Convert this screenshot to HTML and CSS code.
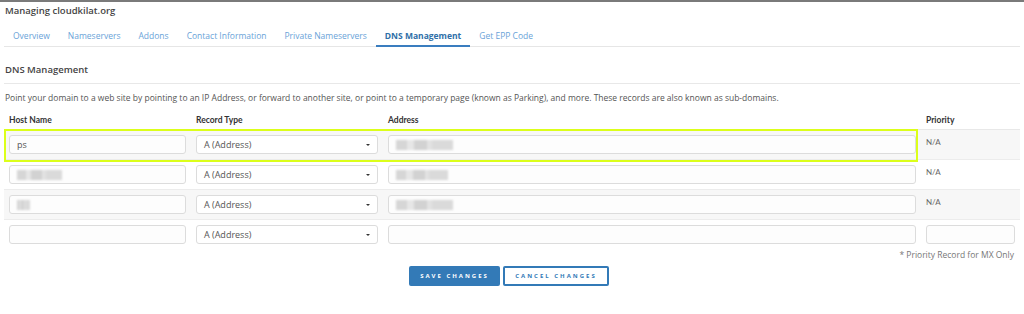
FILE: index.html
```html
<!DOCTYPE html>
<html lang="en">
<head>
    <meta charset="UTF-8">
    <meta name="viewport" content="width=device-width, initial-scale=1.0">
    <title>Managing cloudkilat.org - DNS Management</title>
    <link rel="stylesheet" href="styles.css">
</head>
<body>

    <div class="page">
        <h1 class="page-title">Managing cloudkilat.org</h1>

        <!-- domain tabs -->
        <ul class="domain-tabs">
            <li><a href="#">Overview</a></li>
            <li><a href="#">Nameservers</a></li>
            <li><a href="#">Addons</a></li>
            <li><a href="#">Contact Information</a></li>
            <li><a href="#">Private Nameservers</a></li>
            <li class="active"><a href="#">DNS Management</a></li>
            <li><a href="#">Get EPP Code</a></li>
        </ul>

        <h2 class="section-title">DNS Management</h2>
        <p class="section-intro">Point your domain to a web site by pointing to an IP Address, or forward to another site, or point to a temporary page (known as Parking), and more. These records are also known as sub-domains.</p>

        <form class="dns-form" action="#" method="POST">
            <div class="dns-table-wrap">
                <table class="dns-table">
                    <thead>
                        <tr>
                            <th class="col-host">Host Name</th>
                            <th class="col-type">Record Type</th>
                            <th class="col-address">Address</th>
                            <th class="col-priority">Priority</th>
                        </tr>
                    </thead>
                    <tbody>
                        <tr>
                            <td><div class="field">ps</div></td>
                            <td><div class="field select-field">A (Address)</div></td>
                            <td><div class="field"><span class="blurred w57"></span></div></td>
                            <td class="na">N/A</td>
                        </tr>
                        <tr>
                            <td><div class="field"><span class="blurred w45"></span></div></td>
                            <td><div class="field select-field">A (Address)</div></td>
                            <td><div class="field"><span class="blurred w52"></span></div></td>
                            <td class="na">N/A</td>
                        </tr>
                        <tr>
                            <td><div class="field"><span class="blurred w13"></span></div></td>
                            <td><div class="field select-field">A (Address)</div></td>
                            <td><div class="field"><span class="blurred w57"></span></div></td>
                            <td class="na">N/A</td>
                        </tr>
                        <tr>
                            <td><div class="field"></div></td>
                            <td><div class="field select-field">A (Address)</div></td>
                            <td><div class="field"></div></td>
                            <td><div class="field"></div></td>
                        </tr>
                    </tbody>
                </table>

                <!-- highlight marker drawn over the first record -->
                <div class="row-highlight"></div>
            </div>

            <p class="priority-note">* Priority Record for MX Only</p>

            <div class="form-buttons">
                <button type="submit" class="btn btn-save">Save Changes</button>
                <button type="reset" class="btn btn-cancel">Cancel Changes</button>
            </div>
        </form>
    </div>

</body>
</html>
```

FILE: styles.css
```css
/* Basic reset */
body, html {
    margin: 0;
    padding: 0;
    background-color: #ffffff;
    color: #555;
    font-family: "Open Sans", Arial, sans-serif;
}

body {
    border-top: 2px solid #7a7a7a;
}

.page {
    padding: 0 4px;
}

/* Page title */
.page-title {
    margin: 0;
    padding-left: 1px;
    font-size: 9.5px;
    font-weight: 600;
    line-height: 18px;
    color: #444;
}

/* Tabs */
.domain-tabs {
    list-style: none;
    margin: 6px 0 0;
    padding: 0;
    display: flex;
    border-bottom: 1px solid #e6e6e6;
}

.domain-tabs li {
    margin-bottom: -1px;
}

.domain-tabs a {
    display: block;
    padding: 4px 9px 3px;
    font-size: 8.5px;
    line-height: 12px;
    color: #6aa3d8;
    text-decoration: none;
    border-bottom: 2px solid transparent;
}

.domain-tabs li.active a {
    color: #2f6fa8;
    font-weight: 700;
    border-bottom-color: #3a7dbf;
}

/* Section heading */
.section-title {
    margin: 15px 0 0;
    padding: 0 0 5px 1px;
    font-size: 9.5px;
    font-weight: 600;
    line-height: 16px;
    color: #444;
    border-bottom: 1px solid #e8e8e8;
}

.section-intro {
    margin: 8px 0 0;
    padding-left: 1px;
    font-size: 8.5px;
    line-height: 12px;
    color: #555;
}

/* DNS records table */
.dns-table-wrap {
    position: relative;
    margin-top: 6px;
}

.dns-table {
    width: 100%;
    border-collapse: collapse;
    table-layout: fixed;
}

.dns-table th {
    padding: 0 5px;
    height: 19px;
    text-align: left;
    font-family: Lato, "Open Sans", sans-serif;
    font-size: 8.5px;
    font-weight: 700;
    color: #333;
    border-bottom: 1px solid #e8e8e8;
}

.dns-table .col-host { width: 177px; }
.dns-table .col-type { width: 182px; }
.dns-table .col-address { width: 528px; }
.dns-table .col-priority { width: 89px; }

.dns-table td {
    padding: 5px;
    vertical-align: top;
    border-bottom: 1px solid #ececec;
}

.dns-table tbody tr:nth-child(odd) td {
    background-color: #f7f7f7;
}

.dns-table tbody tr:last-child td {
    border-bottom: none;
}

.dns-table td.na {
    padding-top: 7px;
    font-family: Lato, "Open Sans", sans-serif;
    font-size: 8px;
    line-height: 10px;
    color: #666;
}

.field {
    box-sizing: border-box;
    height: 19px;
    padding: 0 7px;
    border: 1px solid #dcdcdc;
    border-radius: 3px;
    background-color: #fdfdfd;
    font-size: 9px;
    line-height: 17px;
    color: #555;
    display: flex;
    align-items: center;
}

.select-field {
    position: relative;
    background-color: #ffffff;
}

/* small dropdown caret */
.select-field::after {
    content: "";
    position: absolute;
    right: 7px;
    top: 8px;
    border-left: 2px solid transparent;
    border-right: 2px solid transparent;
    border-top: 2px solid #333;
}

/* values hidden in the screenshot */
.blurred {
    display: inline-block;
    height: 10px;
    background: linear-gradient(90deg, #d6d6d6 0 20%, #e6e6e6 20% 32%, #d2d2d2 32% 55%, #e2e2e2 55% 64%, #dadada 64% 100%);
    filter: blur(1px);
}

.blurred.w57 { width: 57px; }
.blurred.w52 { width: 52px; }
.blurred.w45 { width: 45px; }
.blurred.w13 { width: 13px; }

.row-highlight {
    position: absolute;
    left: 0;
    top: 19px;
    width: 914px;
    height: 33px;
    box-sizing: border-box;
    border: 2px solid #dcff1a;
    pointer-events: none;
}

.priority-note {
    margin: 1px 0 0;
    padding-right: 6px;
    text-align: right;
    font-size: 8.5px;
    line-height: 9px;
    color: #777;
}

/* Buttons */
.form-buttons {
    margin-top: 7px;
    padding-right: 6px;
    display: flex;
    justify-content: center;
    gap: 3px;
}

.btn {
    box-sizing: border-box;
    height: 20px;
    padding: 0;
    border: 2px solid #337ab7;
    border-radius: 2px;
    font-family: "Open Sans", Arial, sans-serif;
    font-size: 6px;
    font-weight: 700;
    letter-spacing: 2px;
    text-transform: uppercase;
    white-space: nowrap;
    cursor: pointer;
}

.btn-save {
    width: 91px;
    background-color: #337ab7;
    color: #ffffff;
}

.btn-cancel {
    width: 106px;
    background-color: #ffffff;
    color: #337ab7;
}
```
